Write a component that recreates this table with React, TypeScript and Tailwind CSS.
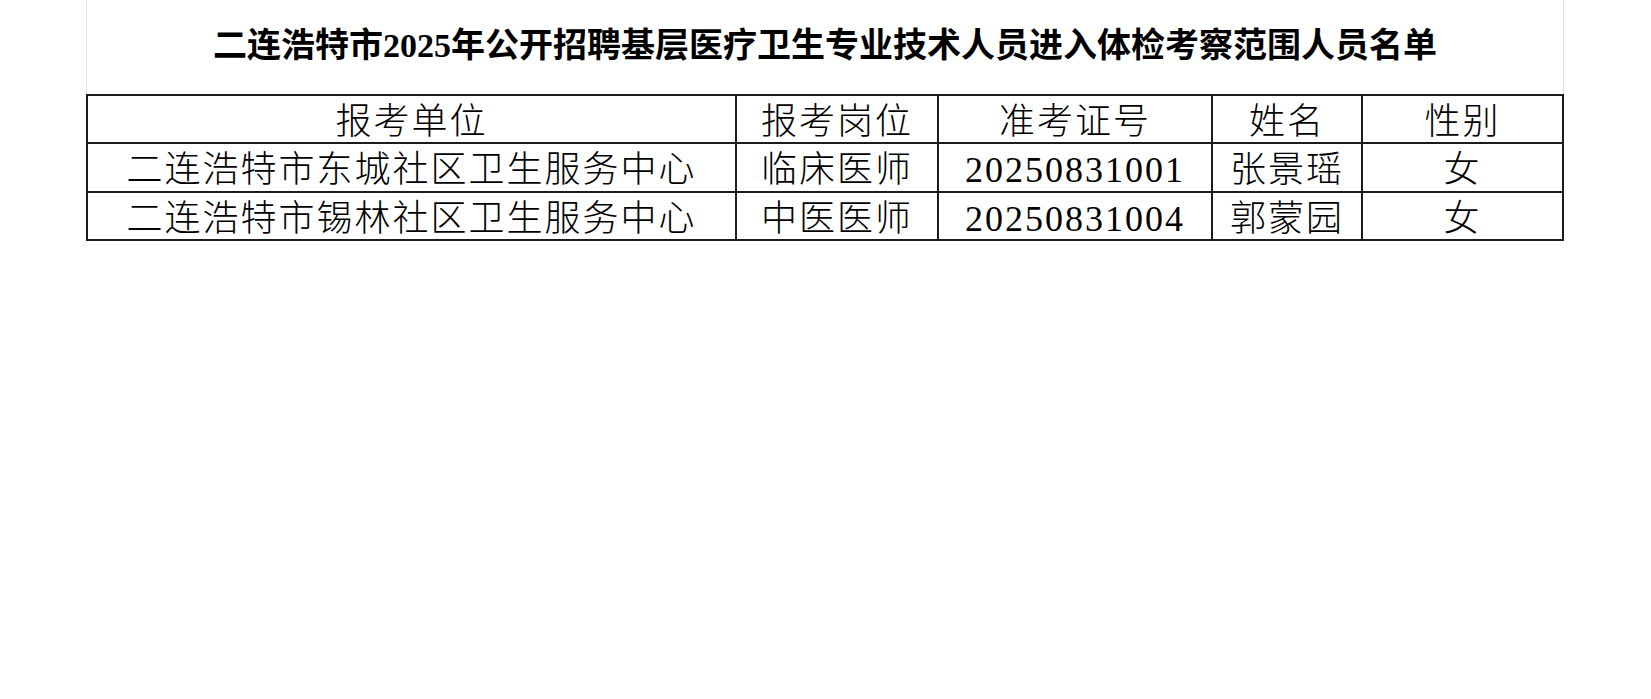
const rows = [
  { unit: '二连浩特市东城社区卫生服务中心', post: '临床医师', ticket: '20250831001', name: '张景瑶', gender: '女' },
  { unit: '二连浩特市锡林社区卫生服务中心', post: '中医医师', ticket: '20250831004', name: '郭蒙园', gender: '女' },
]

const headers = ['报考单位', '报考岗位', '准考证号', '姓名', '性别']

const font = "font-['Liberation_Serif','Noto_Sans_CJK_SC',serif]"

export default function App() {
  return (
    <div className={`min-h-screen bg-white text-black ${font}`}>
      <div className="ml-[86px] w-[1478px]">
        <div className="flex h-[94px] items-center justify-center border-x border-[#e4e4e4] pb-[2px]">
          <h1 className="text-[34px] font-bold leading-none">
            二连浩特市2025年公开招聘基层医疗卫生专业技术人员进入体检考察范围人员名单
          </h1>
        </div>
        <table className="w-[1478px] table-fixed border-separate border-spacing-0 border-l-2 border-t-2 border-[#1c1c1c]">
          <colgroup>
            <col className="w-[649px]" />
            <col className="w-[202px]" />
            <col className="w-[274px]" />
            <col className="w-[150px]" />
            <col className="w-[201px]" />
          </colgroup>
          <thead>
            <tr className="h-[48px]">
              {headers.map((h) => (
                <th
                  key={h}
                  className="border-b-2 border-r-2 border-[#1c1c1c] p-0 pt-[6px] text-center text-[36px] font-light leading-none tracking-[2px]"
                >
                  {h}
                </th>
              ))}
            </tr>
          </thead>
          <tbody>
            {rows.map((r, i) => (
              <tr key={r.ticket} className={i === 0 ? 'h-[49px]' : 'h-[48px]'}>
                {[r.unit, r.post, r.ticket, r.name, r.gender].map((v, j) => (
                  <td
                    key={j}
                    className="border-b-2 border-r-2 border-[#1c1c1c] p-0 pt-[5px] text-center text-[36px] font-light leading-none tracking-[2px]"
                  >
                    {v}
                  </td>
                ))}
              </tr>
            ))}
          </tbody>
        </table>
      </div>
    </div>
  )
}
